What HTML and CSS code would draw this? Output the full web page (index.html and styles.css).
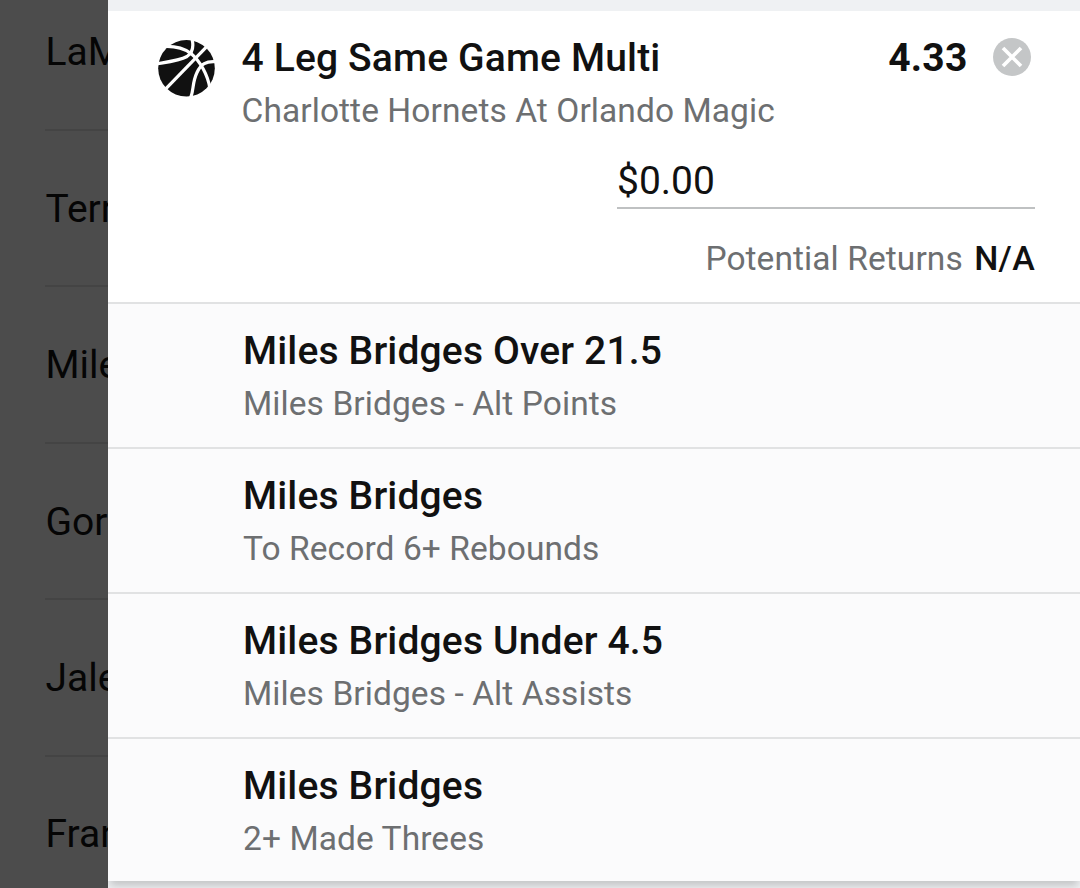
FILE: index.html
```html
<!DOCTYPE html>
<html lang="en">
<head>
  <meta charset="UTF-8">
  <title>Bet Slip</title>
  <link rel="stylesheet" href="styles.css">
</head>
<body>
  <div class="page">

    <!-- PLAYER LIST -->
    <ul class="players">
      <li>LaMelo</li>
      <li>Terry</li>
      <li>Miles</li>
      <li>Gordon</li>
      <li>Jalen</li>
      <li>Franz</li>
    </ul>

    <!-- BET SLIP -->
    <main class="slip">
      <div class="card">
        <section class="bet">
          <svg class="ball" viewBox="0 0 57 57">
            <circle cx="28.5" cy="28.3" r="28.3" fill="#111"/>
            <g fill="none" stroke="#fff" stroke-width="3.2">
              <path d="M7 49.7 L49.7 5.7"/>
              <path d="M6 6.5 C18 6 27 9 33 13.5 C42 21 50 35 52 49"/>
              <path d="M-1 23.7 C11 21.8 22 20.5 29 16.5 C35 12.5 36 7 34 -1"/>
              <path d="M32.5 58 C36 50 34 43 39 32.5 C43 24 48 21 58 21.8"/>
            </g>
          </svg>
          <div class="bet-info">
            <div class="bet-top">
              <h1 class="title">4 Leg Same Game Multi</h1>
              <span class="odds">4.33</span>
              <button class="remove" aria-label="Remove">
                <svg viewBox="0 0 38 38">
                  <circle cx="19" cy="19" r="19" fill="#c4c6c7"/>
                  <path d="M10 10 L28 28 M28 10 L10 28" stroke="#fff" stroke-width="3.7"/>
                </svg>
              </button>
            </div>
            <p class="sub">Charlotte Hornets At Orlando Magic</p>
            <div class="stake">$0.00</div>
            <p class="returns">Potential Returns <b>N/A</b></p>
          </div>
        </section>

        <section class="leg">
          <h2 class="title">Miles Bridges Over 21.5</h2>
          <p class="sub">Miles Bridges - Alt Points</p>
        </section>
        <section class="leg">
          <h2 class="title">Miles Bridges</h2>
          <p class="sub">To Record 6+ Rebounds</p>
        </section>
        <section class="leg">
          <h2 class="title">Miles Bridges Under 4.5</h2>
          <p class="sub">Miles Bridges - Alt Assists</p>
        </section>
        <section class="leg">
          <h2 class="title">Miles Bridges</h2>
          <p class="sub">2+ Made Threes</p>
        </section>
      </div>
    </main>

  </div>
</body>
</html>
```
FILE: styles.css
```css
* {
  box-sizing: border-box;
  margin: 0;
  padding: 0;
}
body {
  font-family: Roboto, sans-serif;
  color: #111;
}
.page {
  display: flex;
  height: 888px;
  overflow: hidden;
}

/* player list */
.players {
  width: 108px;
  flex-shrink: 0;
  padding-left: 45px;
  background: #4c4c4c;
  color: #050505;
  list-style: none;
  font-size: 39px;
  text-indent: 0.5px;
  overflow: hidden;
}
.players li {
  height: 156.4px;
  line-height: 52px;
  padding-top: 52px;
  border-bottom: 2px solid #444;
  white-space: nowrap;
}
.players li:first-child {
  height: 131px;
  padding-top: 26px;
}
.players li:last-child {
  padding-top: 51px;
}

/* bet slip */
.slip {
  flex: 1;
  padding-top: 11px;
  background: #eff1f3;
  overflow: hidden;
}
.card {
  background: #fff;
  box-shadow: 0 7px 8px -2px rgba(0, 0, 0, 0.18);
}
.bet {
  display: flex;
  padding: 21px 45px 18px 50px;
  border-bottom: 2px solid #e1e2e3;
}
.ball {
  width: 57px;
  height: 57px;
  margin: 8px 26.5px 0 0;
}
.bet-info {
  flex: 1;
}
.bet-top {
  display: flex;
}
.title {
  font-size: 39px;
  font-weight: 500;
  line-height: 52px;
  letter-spacing: 0.16px;
}
.odds {
  margin-left: auto;
  font-size: 39px;
  font-weight: 700;
  line-height: 52px;
  letter-spacing: 0.2px;
}
.remove {
  width: 38px;
  height: 38px;
  margin: 6px 4px 0 25.5px;
  border: none;
  background: none;
}
.remove svg {
  display: block;
}
.sub, .returns {
  height: 52px;
  font-size: 33.5px;
  line-height: 52px;
  color: #6d6f71;
  letter-spacing: 0.08px;
}
.sub {
  padding-top: 1px;
}
.stake {
  width: 418px;
  margin: 19px 0 23px auto;
  border-bottom: 2px solid #bfc1c2;
  font-size: 39px;
  line-height: 52px;
}
.returns {
  text-align: right;
}
.returns b {
  margin-left: 3px;
  font-size: 34px;
  font-weight: 500;
  letter-spacing: 0.3px;
  color: #111;
}
.leg {
  height: 145px;
  padding: 21px 0 0 135px;
  background: #fbfbfc;
  border-bottom: 2px solid #e1e2e3;
}
.leg:last-child {
  height: 142px;
  border-bottom: none;
}
```
